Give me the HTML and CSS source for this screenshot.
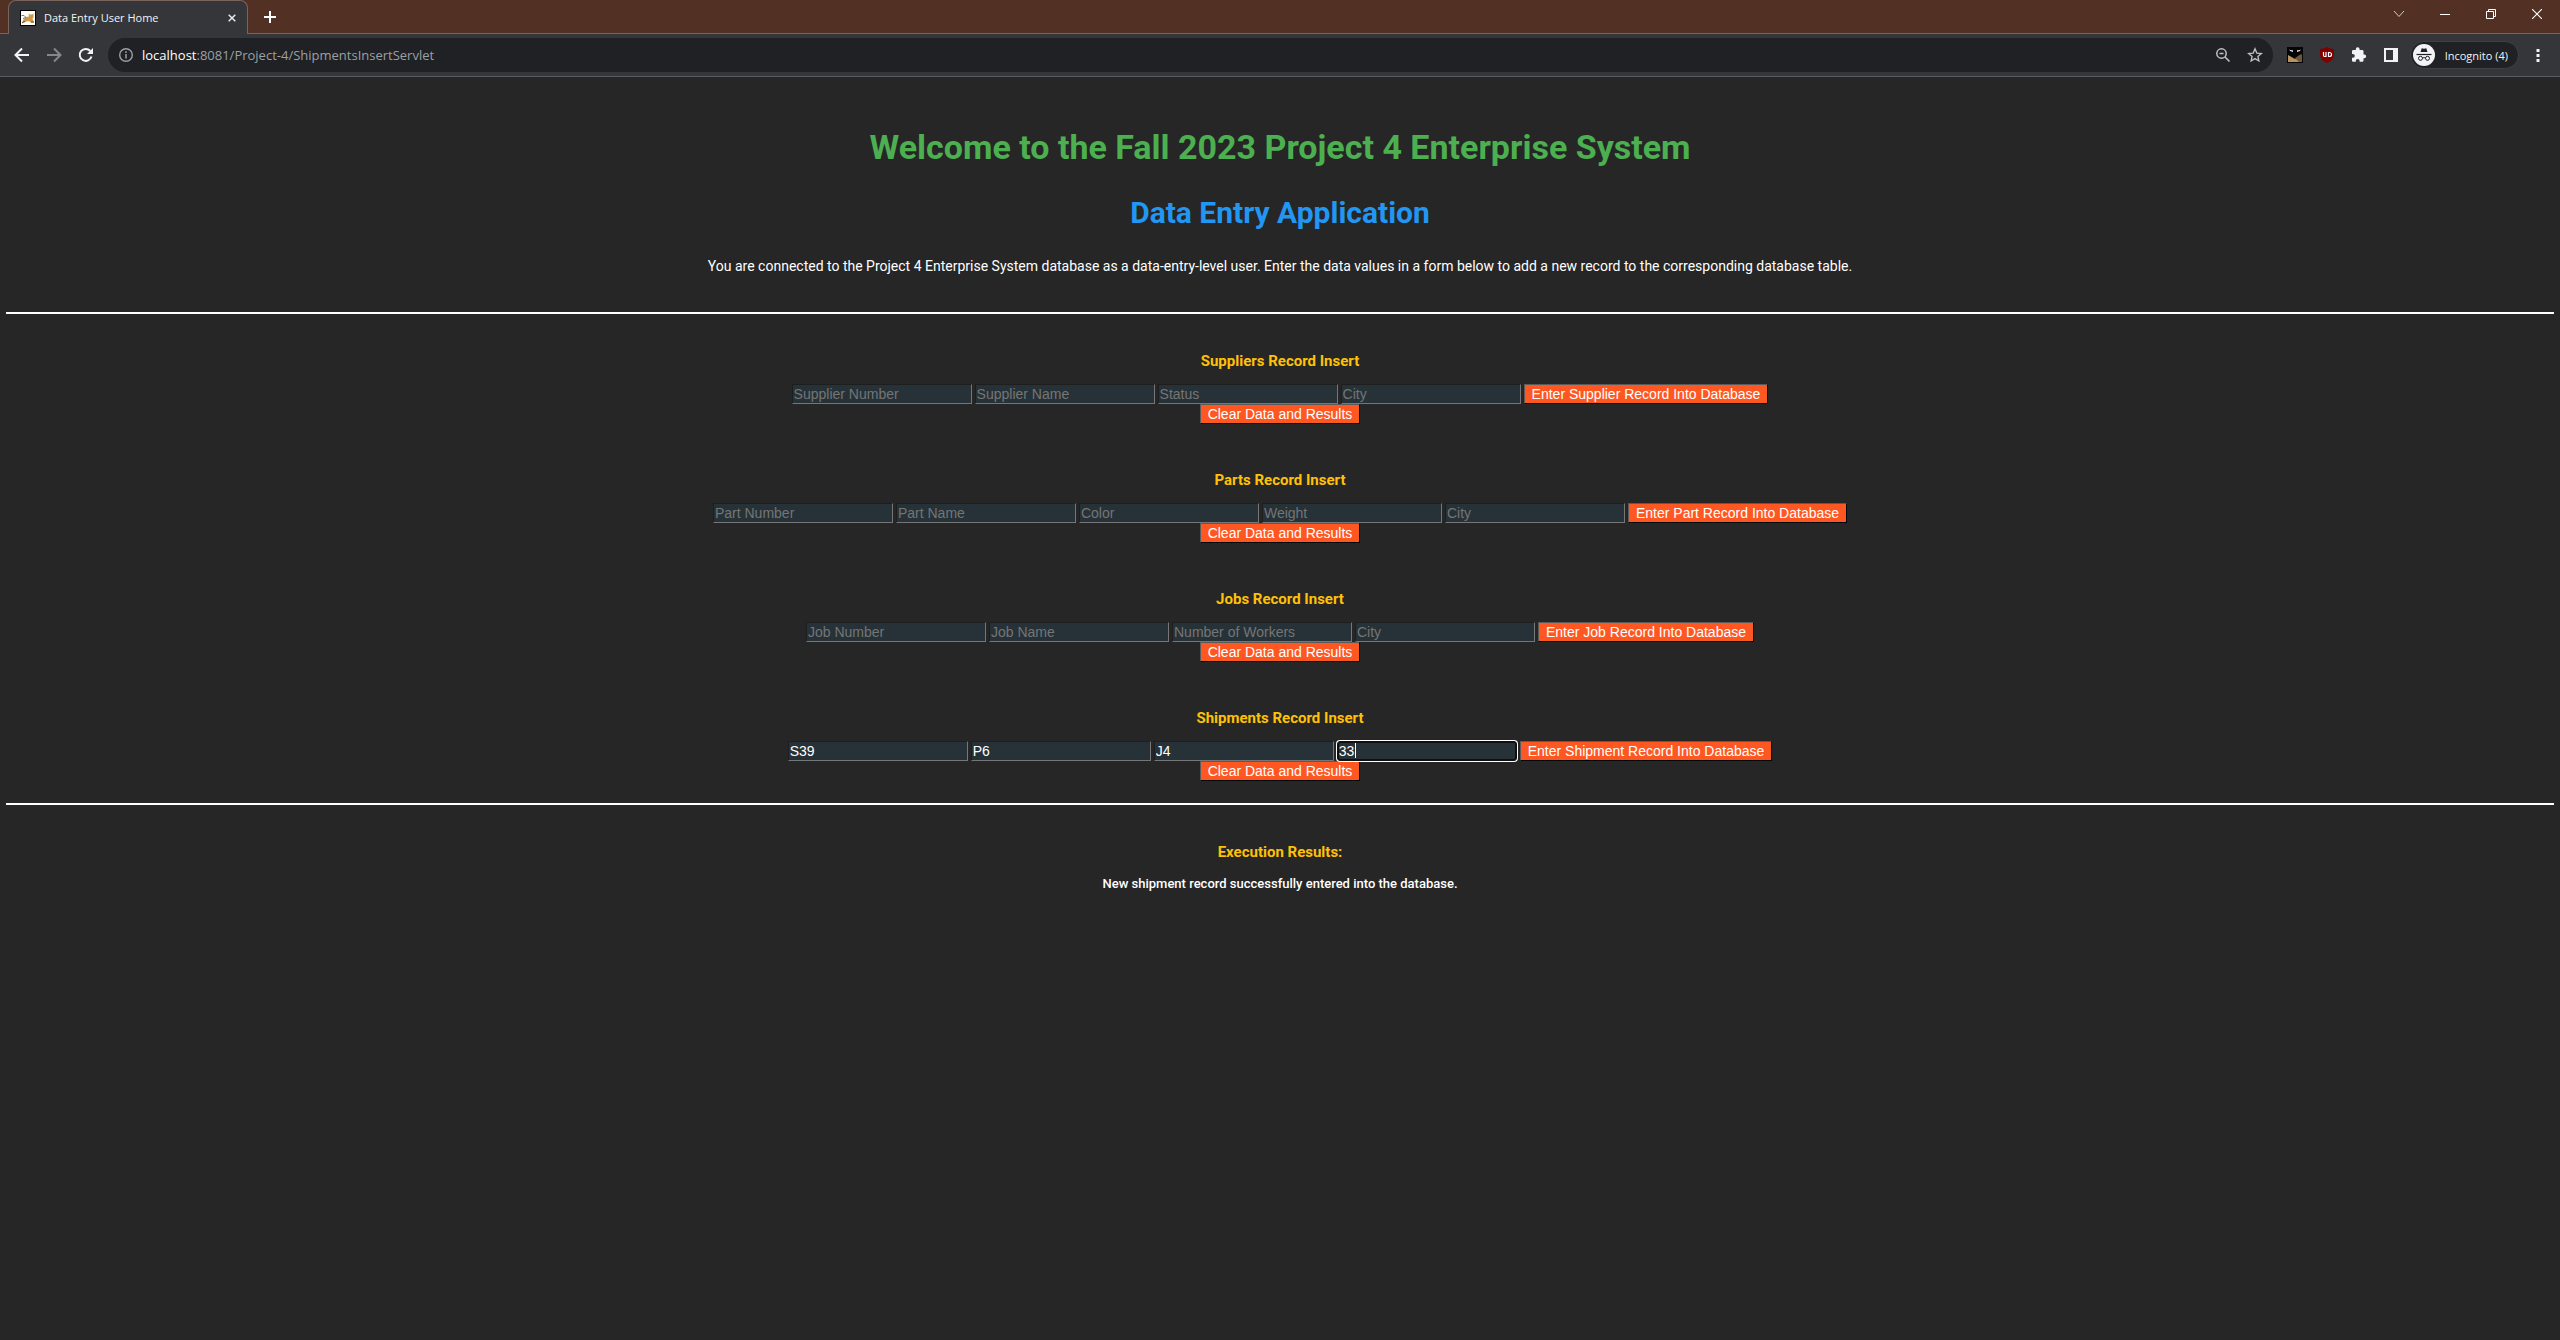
FILE: index.html
```html
<!DOCTYPE html>
<html lang="en">
<head>
<meta charset="utf-8">
<title>Data Entry User Home</title>
<link rel="stylesheet" href="styles.css">
</head>
<body>
<header class="browser">
  <div class="tabstrip">
    <div class="tab">
      <svg class="favicon" viewBox="0 0 16 16" aria-hidden="true"><rect width="16" height="16" fill="#000"/><rect x="1" y="1" width="14" height="14" fill="#fff"/><path d="M8.500 3.500l1.500 1h2l1.500-1v4l-1 1 1.500 4h-3L8.500 11 5 12l-3 1.500 1-3.500 3-3 3-.5z" fill="#cf9c45"/><path d="M1.500 5.500h2.500l2 2-3 1" stroke="#777" stroke-width="1" fill="none"/><path d="M2 12.500l3-1M11 12h3" stroke="#6b5330" fill="none"/></svg>
      <span class="tab-title">Data Entry User Home</span>
      <button class="icon-button tab-close" aria-label="Close tab"><svg width="8" height="8" viewBox="0 0 8 8"><path d="M.7.7l6.600 6.600M7.300.7L.7 7.300" stroke="#e8eaed" stroke-width="1.500"/></svg></button>
    </div>
    <button class="icon-button new-tab" aria-label="New tab"><svg width="12" height="12" viewBox="0 0 12 12"><path d="M6 0v12M0 6h12" stroke="#fff" stroke-width="2"/></svg></button>
    <div class="window-controls">
      <button class="icon-button" aria-label="Search tabs"><svg width="12" height="12" viewBox="0 0 12 12"><path d="M1 3l5 5.500L11 3" fill="none" stroke="#d5cbc7" stroke-width="1"/></svg></button>
      <button class="icon-button" aria-label="Minimize"><svg width="10" height="10" viewBox="0 0 10 10"><path d="M0 5.500h10" stroke="#fff"/></svg></button>
      <button class="icon-button" aria-label="Restore"><svg width="10" height="10" viewBox="0 0 10 10"><path d="M.5 2.500h7v7h-7zM2.500 2.500v-2h7v7h-2" fill="none" stroke="#fff"/></svg></button>
      <button class="icon-button" aria-label="Close"><svg width="10" height="10" viewBox="0 0 10 10"><path d="M0 0l10 10M10 0L0 10" stroke="#fff" stroke-width="1.100"/></svg></button>
    </div>
  </div>
  <div class="toolbar">
    <button class="icon-button nav" aria-label="Back"><svg width="16" height="16" viewBox="0 0 16 16"><path d="M15 8H2M8 1.500L1.500 8 8 14.500" fill="none" stroke="#f1f3f4" stroke-width="2"/></svg></button>
    <button class="icon-button nav" aria-label="Forward"><svg width="16" height="16" viewBox="0 0 16 16"><path d="M1 8h13M8 1.500L14.500 8 8 14.500" fill="none" stroke="#86878a" stroke-width="2"/></svg></button>
    <button class="icon-button nav" aria-label="Reload"><svg width="16" height="16" viewBox="0 0 16 16"><path d="M13.500 9.500A6 6 0 1 1 12.300 4" fill="none" stroke="#f1f3f4" stroke-width="2"/><path d="M15 1v6H9z" fill="#f1f3f4"/></svg></button>
    <div class="omnibox">
      <svg width="16" height="16" viewBox="0 0 16 16" aria-hidden="true"><circle cx="8" cy="8" r="6.300" fill="none" stroke="#9aa0a6" stroke-width="1.400"/><path d="M8 7v4.500M8 4.300v1.600" stroke="#9aa0a6" stroke-width="1.500"/></svg>
      <span class="url"><span class="host">localhost</span>:8081/Project-4/ShipmentsInsertServlet</span>
      <button class="icon-button box-action" aria-label="Zoom"><svg width="16" height="16" viewBox="0 0 16 16"><circle cx="6.500" cy="6.500" r="4.700" fill="none" stroke="#bdc1c6" stroke-width="1.500"/><path d="M4.500 6.500h4M10 10l4.500 4.500" stroke="#bdc1c6" stroke-width="1.600"/></svg></button>
      <button class="icon-button box-action" aria-label="Bookmark"><svg width="16" height="16" viewBox="0 0 16 16"><path d="M8 1.800l1.800 4.300 4.600.4-3.500 3 1 4.500L8 11.600 4.100 14l1-4.500-3.500-3 4.600-.4z" fill="none" stroke="#bdc1c6" stroke-width="1.300"/></svg></button>
    </div>
    <div class="extensions">
      <button class="icon-button" aria-label="Batman extension"><svg width="16" height="16" viewBox="0 0 16 16"><rect width="16" height="16" fill="#050505"/><path d="M1 8l7 4 7-4v7H1z" fill="#b9935f"/><path d="M8 11l6-4 1 1v7h-3z" fill="#6e583c"/><path d="M2 2l1 1 3 .3V5L3 4zM14 2l-1 1-3 .3V5l3-1z" fill="#ddd"/></svg></button>
      <button class="icon-button" aria-label="uBlock"><svg width="16" height="16" viewBox="0 0 16 16"><path d="M8 0q3 2 7 2v6q0 5-7 8-7-3-7-8V2q4 0 7-2z" fill="#800000"/><path d="M4.500 5v3q0 1.500 1 1.500H7V5M9.500 5.500v4h1a2 2 0 0 0 0-4z" stroke="#fff" stroke-width="1.200" fill="none"/></svg></button>
      <button class="icon-button" aria-label="Extensions"><svg width="16" height="16" viewBox="0 0 16 16"><path d="M13.300 7.500h-.8V4.400q0-1.300-1.300-1.300H8.600v-.9a1.900 1.900 0 0 0-3.800 0v.9H2.200Q1 3.100 1 4.400v2.500h.9a1.900 1.900 0 0 1 0 3.800H1v2.700q0 1.300 1.300 1.300h2.500v-.9a1.900 1.900 0 0 1 3.800 0v.9h2.600q1.300 0 1.300-1.300v-2.200h.8a1.850 1.850 0 0 0 0-3.700z" fill="#f1f3f4"/></svg></button>
      <button class="icon-button" aria-label="Side panel"><svg width="14" height="14" viewBox="0 0 14 14"><path d="M0 0h14v14H0zM2 2v10h7V2z" fill="#f1f3f4" fill-rule="evenodd"/></svg></button>
    </div>
    <button class="profile"><svg width="22" height="22" viewBox="0 0 22 22" aria-hidden="true"><circle cx="11" cy="11" r="11" fill="#f1f3f4"/><path d="M7.500 8L8.700 4.200l2.300.5 2.300-.5L14.500 8z" fill="#202124"/><path d="M3.500 10.500h15" stroke="#202124" stroke-width="1.200"/><circle cx="7.500" cy="14.300" r="2" fill="none" stroke="#202124"/><circle cx="14.500" cy="14.300" r="2" fill="none" stroke="#202124"/><path d="M9.500 14q1.500-.8 3 0" stroke="#202124" fill="none"/></svg><span>Incognito (4)</span></button>
    <button class="icon-button menu" aria-label="Menu"><svg width="4" height="14" viewBox="0 0 4 14"><path d="M.5 1h3v3h-3zM.5 6h3v3h-3zM.5 11h3v3h-3z" fill="#f1f3f4"/></svg></button>
  </div>
</header>

<main class="page">
  <h1 class="title">Welcome to the Fall 2023 Project 4 Enterprise System</h1>
  <h2 class="subtitle">Data Entry Application</h2>
  <p class="intro">You are connected to the Project 4 Enterprise System database as a data-entry-level user. Enter the data values in a form below to add a new record to the corresponding database table.</p>
  <hr class="rule">
  <div class="forms">
    <form class="record">
      <h4 class="heading">Suppliers Record Insert</h4>
      <div class="fields">
        <input class="field" type="text" placeholder="Supplier Number" aria-label="Supplier Number">
        <input class="field" type="text" placeholder="Supplier Name" aria-label="Supplier Name">
        <input class="field" type="text" placeholder="Status" aria-label="Status">
        <input class="field" type="text" placeholder="City" aria-label="City">
        <button class="action" type="button">Enter Supplier Record Into Database</button>
      </div>
      <button class="action" type="button">Clear Data and Results</button>
    </form>
    <form class="record">
      <h4 class="heading">Parts Record Insert</h4>
      <div class="fields">
        <input class="field" type="text" placeholder="Part Number" aria-label="Part Number">
        <input class="field" type="text" placeholder="Part Name" aria-label="Part Name">
        <input class="field" type="text" placeholder="Color" aria-label="Color">
        <input class="field" type="text" placeholder="Weight" aria-label="Weight">
        <input class="field" type="text" placeholder="City" aria-label="City">
        <button class="action" type="button">Enter Part Record Into Database</button>
      </div>
      <button class="action" type="button">Clear Data and Results</button>
    </form>
    <form class="record">
      <h4 class="heading">Jobs Record Insert</h4>
      <div class="fields">
        <input class="field" type="text" placeholder="Job Number" aria-label="Job Number">
        <input class="field" type="text" placeholder="Job Name" aria-label="Job Name">
        <input class="field" type="text" placeholder="Number of Workers" aria-label="Number of Workers">
        <input class="field" type="text" placeholder="City" aria-label="City">
        <button class="action" type="button">Enter Job Record Into Database</button>
      </div>
      <button class="action" type="button">Clear Data and Results</button>
    </form>
    <form class="record">
      <h4 class="heading">Shipments Record Insert</h4>
      <div class="fields">
        <input class="field" type="text" value="S39" aria-label="Supplier Number">
        <input class="field" type="text" value="P6" aria-label="Part Number">
        <input class="field" type="text" value="J4" aria-label="Job Number">
        <span class="editing"><input class="field active" type="text" value="33" aria-label="Quantity"></span>
        <button class="action" type="button">Enter Shipment Record Into Database</button>
      </div>
      <button class="action" type="button">Clear Data and Results</button>
    </form>
  </div>
  <hr class="rule">
  <section class="results">
    <h4 class="heading">Execution Results:</h4>
    <p class="message">New shipment record successfully entered into the database.</p>
  </section>
</main>
</body>
</html>
```
FILE: styles.css
```css
* { box-sizing: border-box; }

body {
  margin: 0;
  min-height: 100vh;
  background: #262626;
  color: #fff;
  font-family: Roboto, sans-serif;
}

button { font: inherit; }

/* Browser frame */
.browser { font-family: "Open Sans", "Noto Sans", sans-serif; }

.icon-button {
  display: grid;
  place-items: center;
  width: 16px;
  height: 16px;
  padding: 0;
  border: 0;
  background: none;
}

.tabstrip {
  display: flex;
  height: 34px;
  padding-left: 8px;
  background: #523023;
  box-shadow: inset 0 -1px #7a635a;
}

.tab {
  display: flex;
  align-items: center;
  gap: 8px;
  width: 240px;
  padding: 0 7px 0 11px;
  border: 1px solid #7a635a;
  border-bottom: 0;
  border-radius: 8px 8px 0 0;
  background: #35363a;
}

.favicon { width: 16px; height: 16px; }

.tab-title {
  flex: 1;
  color: #f1f3f4;
  font-size: 11px;
  line-height: 16px;
  white-space: nowrap;
}

.new-tab { align-self: center; margin-left: 14px; }

.window-controls {
  display: flex;
  align-items: center;
  gap: 30px;
  height: 28px;
  margin-left: auto;
  padding-right: 15px;
}

.toolbar {
  display: flex;
  align-items: center;
  height: 43px;
  padding-left: 14px;
  background: #35363a;
  border-bottom: 1px solid #5c5c60;
}

.nav { margin-right: 16px; }

.nav:nth-child(3) { margin-right: 14px; }

.omnibox {
  display: flex;
  flex: 1;
  align-items: center;
  gap: 8px;
  height: 34px;
  margin-right: 14px;
  padding: 0 10px;
  border-radius: 17px;
  background: #202124;
}

.url {
  flex: 1;
  color: #9aa0a6;
  font-size: 13px;
  line-height: 20px;
}

.host { color: #fff; }

.box-action + .box-action { margin-left: 8px; }

.extensions { display: flex; gap: 16px; }

.profile {
  display: flex;
  align-items: center;
  gap: 10px;
  height: 28px;
  margin: 0 11px;
  padding: 0 10px 0 2px;
  border: 1px solid #3f4043;
  border-radius: 14px;
  background: #202124;
  color: #f1f3f4;
  font-size: 11px;
  white-space: nowrap;
}

.menu { margin-right: 14px; }

/* Data entry page */
.page {
  padding: 0 6px;
  text-align: center;
}

.title {
  margin: 0;
  padding-top: 50px;
  color: #4caf50;
  font-size: 34px;
  line-height: 40px;
}

.subtitle {
  margin: 28px 0 0;
  color: #2196f3;
  font-size: 30px;
  line-height: 36px;
}

.intro {
  margin: 26px 0 37px;
  font-size: 14px;
  line-height: 18px;
}

.rule {
  height: 2px;
  margin: 0;
  border: 0;
  background: #fff;
}

.forms {
  display: grid;
  gap: 47px;
  padding: 38px 0 22px;
}

.record {
  display: flex;
  flex-direction: column;
  align-items: center;
}

.heading {
  margin: 0;
  color: #ffc107;
  font-size: 15px;
  line-height: 18px;
}

.fields {
  display: flex;
  gap: 3px;
  margin-top: 14px;
}

.field,
.action {
  height: 20px;
  font-family: "Liberation Sans", Arial, sans-serif;
  font-size: 14px;
  line-height: 18px;
}

.field {
  width: 180px;
  padding: 0 1px;
  border: 1px solid;
  border-color: #1e1e1e #767676 #767676 #1e1e1e;
  background: #263238;
  color: #fff;
  outline: 0;
}

.field::placeholder { color: #757575; }

.editing {
  position: relative;
  display: flex;
}

.editing::after {
  content: "";
  position: absolute;
  top: 2px;
  left: 18px;
  width: 1px;
  height: 15px;
  background: #fff;
}

.active {
  border: 1px solid #101010;
  border-radius: 3px;
  box-shadow: 0 0 0 1px #fff, inset 0 0 0 1px #101010;
}

.action {
  padding: 0 7px;
  border: 1px solid;
  border-color: #5a5a5a #000 #000 #5a5a5a;
  background: #ff5722;
  color: #fff;
  white-space: nowrap;
}

.results { padding-top: 38px; }

.message {
  margin: 14px 0 0;
  font-size: 13px;
  line-height: 18px;
  font-weight: 500;
}
```
